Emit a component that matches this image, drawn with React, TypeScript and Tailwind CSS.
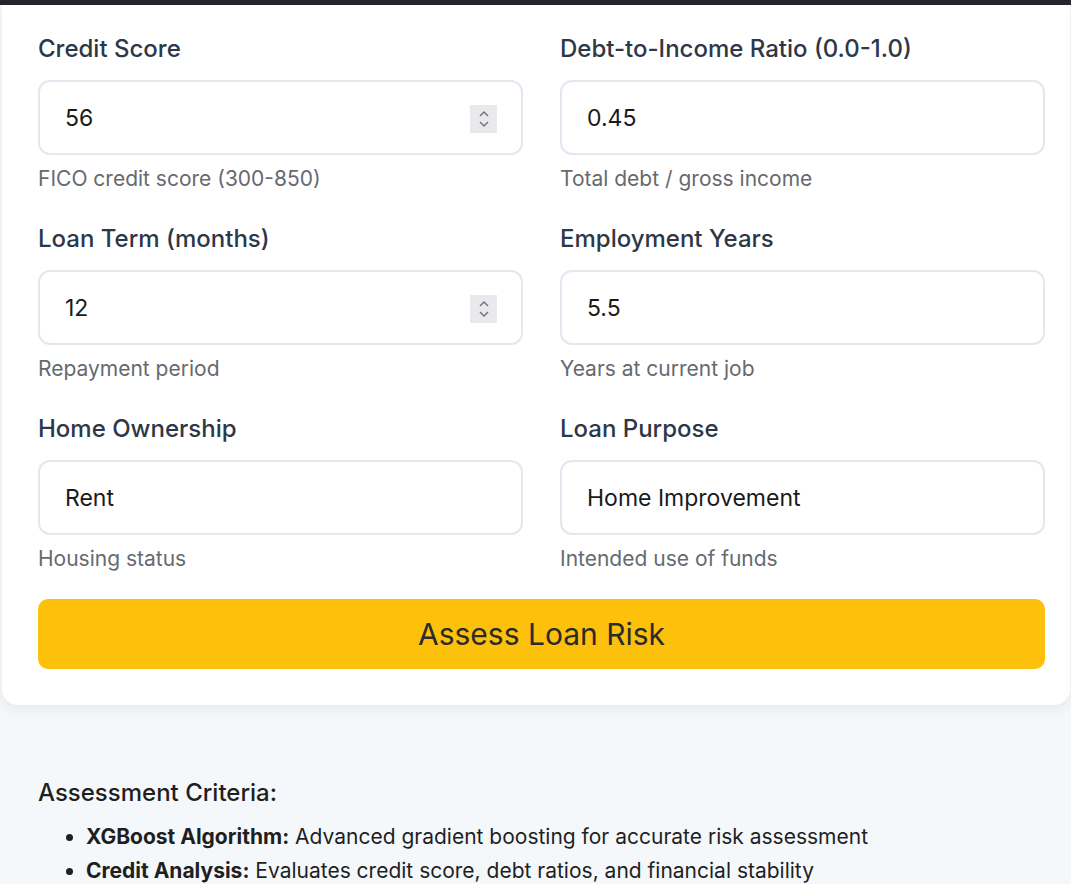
import React from "react";

function Spinner() {
  return (
    <div className="absolute right-[24px] top-[23px] flex h-[28px] w-[27px] flex-col items-center justify-center bg-[#e9e9ed]">
      <svg width="12" height="22" viewBox="0 0 12 22" fill="none" stroke="#74747f" strokeWidth="1.5">
        <path d="M2 8 L6 4 L10 8" />
        <path d="M2 14 L6 18 L10 14" />
      </svg>
    </div>
  );
}

function Field({ label, value, help, spinner }: { label: string; value: string; help: string; spinner?: boolean }) {
  return (
    <div className="flex flex-col">
      <div className="h-[30px] text-[24px] leading-[30px] font-medium text-[#2d3748]">{label}</div>
      <div className="relative mt-[16px] flex h-[75px] items-center rounded-[12px] border-2 border-[#e2e8f0] bg-white pl-[25px] pt-[2px] text-[23px] text-[#1a1a1a]">
        {value}
        {spinner && <Spinner />}
      </div>
      <div className="mt-[11px] h-[26px] text-[21px] leading-[26px] text-[#666a70]">{help}</div>
    </div>
  );
}

export default function App() {
  return (
    <div className="min-h-[884px] w-[1071px] overflow-hidden bg-[#f5f8fb]" style={{ fontFamily: "Inter, 'Noto Sans', sans-serif" }}>
      <div className="h-[5px] w-full bg-[#26252d]" />
      <div className="ml-[2px] w-[1068px] rounded-b-[16px] bg-white pl-[36px] pr-[23px] pt-[29px] pb-[36px] shadow-[0_4px_14px_rgba(15,23,42,0.07)]">
        <div className="grid grid-cols-[485px_485px] gap-x-[37px] gap-y-[32px]">
          <Field label="Credit Score" value="56" help="FICO credit score (300-850)" spinner />
          <Field label="Debt-to-Income Ratio (0.0-1.0)" value="0.45" help="Total debt / gross income" />
          <Field label="Loan Term (months)" value="12" help="Repayment period" spinner />
          <Field label="Employment Years" value="5.5" help="Years at current job" />
          <Field label="Home Ownership" value="Rent" help="Housing status" />
          <Field label="Loan Purpose" value="Home Improvement" help="Intended use of funds" />
        </div>
        <button className="mt-[27px] flex h-[70px] w-[1007px] items-center justify-center rounded-[10px] bg-[#fdc10b] text-[30px] text-[#2b2b2b]">
          Assess Loan Risk
        </button>
      </div>
      <div className="pl-[38px] pt-[73px]">
        <div className="text-[24px] leading-[30px] font-medium text-[#1f1f1f]">Assessment Criteria:</div>
        <ul className="mt-[12px] list-disc pl-[48px] text-[21px] leading-[34px] text-[#1f1f1f]">
          <li>
            <span className="font-bold">XGBoost Algorithm:</span> Advanced gradient boosting for accurate risk assessment
          </li>
          <li>
            <span className="font-bold">Credit Analysis:</span> Evaluates credit score, debt ratios, and financial stability
          </li>
        </ul>
      </div>
    </div>
  );
}
